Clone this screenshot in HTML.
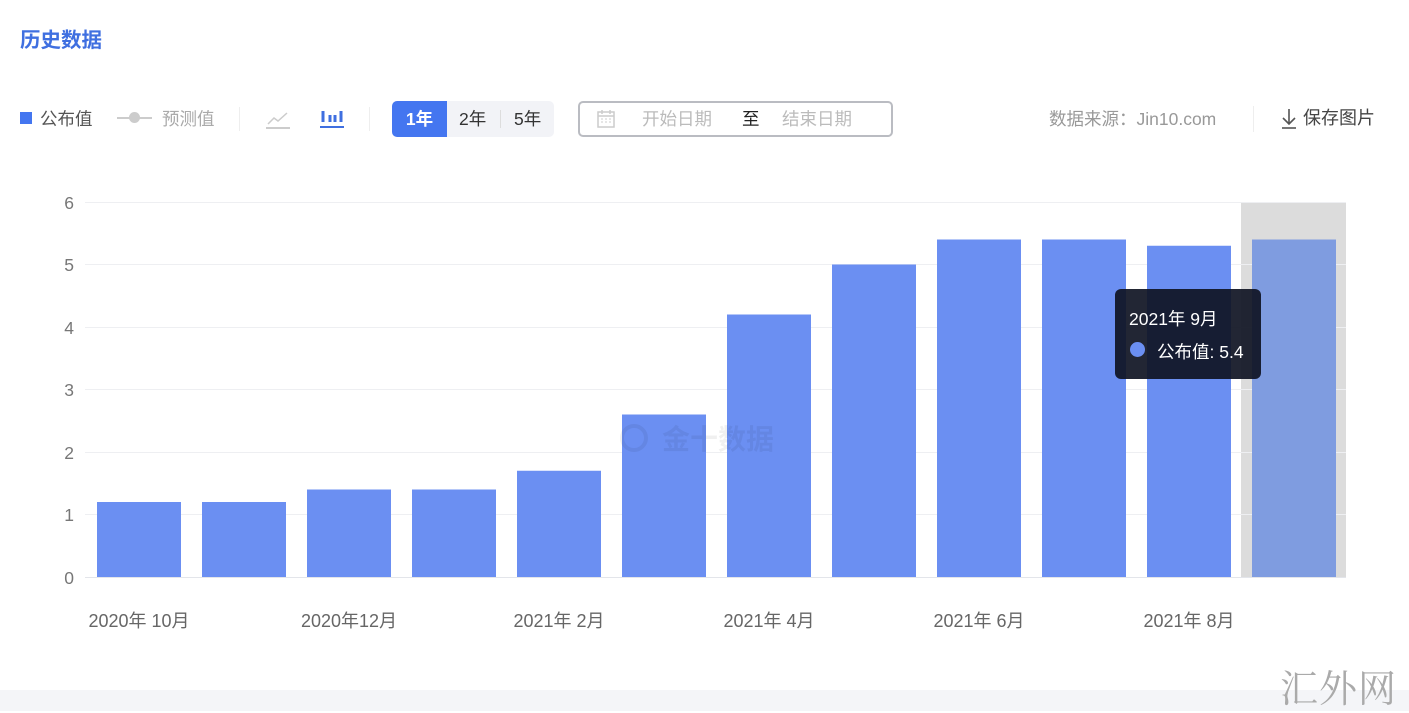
<!DOCTYPE html>
<html><head><meta charset="utf-8">
<style>
*{margin:0;padding:0;box-sizing:border-box}
body{width:1409px;height:711px;background:#fff;position:relative;overflow:hidden;font-family:"Liberation Sans","Noto Sans CJK SC",sans-serif}
.a{position:absolute;white-space:nowrap}
</style></head><body>
<div class="a" style="left:20px;top:23px;font-size:20.5px;font-weight:bold;color:#3f6fe0">历史数据</div>

<div class="a" style="left:20px;top:112px;width:12px;height:12px;background:#4476f0"></div>
<div class="a" style="left:40px;top:106px;font-size:17.5px;color:#555">公布值</div>
<div class="a" style="left:117px;top:117px;width:35px;height:2px;background:#ccc"></div>
<div class="a" style="left:129px;top:112px;width:11px;height:11px;border-radius:50%;background:#ccc"></div>
<div class="a" style="left:162px;top:106px;font-size:17.5px;color:#aaa">预测值</div>
<div class="a" style="left:239px;top:107px;width:1px;height:24px;background:#eee"></div>
<svg class="a" style="left:265px;top:108px" width="26" height="22"><path d="M3 16 L9 10 L13 13 L22 5" stroke="#ccc" stroke-width="1.5" fill="none"/><path d="M1 20 H25" stroke="#ccc" stroke-width="2"/></svg>
<svg class="a" style="left:319px;top:106px" width="26" height="24"><path d="M4 5 V16 M11 9 V16 M16 9 V16 M22 5 V16" stroke="#3f6fe0" stroke-width="3" fill="none"/><path d="M1 21 H25" stroke="#3f6fe0" stroke-width="2"/></svg>
<div class="a" style="left:369px;top:107px;width:1px;height:24px;background:#eee"></div>

<div class="a" style="left:392px;top:101px;width:162px;height:36px;background:#f2f3f7;border-radius:5px"></div>
<div class="a" style="left:392px;top:101px;width:55px;height:36px;background:#4476f0;border-radius:5px 0 0 5px;color:#fff;font-size:17.5px;font-weight:bold;text-align:center;line-height:36px">1年</div>
<div class="a" style="left:459px;top:101px;font-size:17.5px;color:#333;line-height:36px">2年</div>
<div class="a" style="left:500px;top:110px;width:1px;height:18px;background:#ddd"></div>
<div class="a" style="left:514px;top:101px;font-size:17.5px;color:#333;line-height:36px">5年</div>

<div class="a" style="left:578px;top:101px;width:315px;height:36px;border:2px solid #babcc2;border-radius:5px"></div>
<svg class="a" style="left:596px;top:109px" width="20" height="20"><rect x="2" y="3" width="16" height="15" fill="none" stroke="#ccc" stroke-width="1.5"/><path d="M2 7 H18 M6 1 V5 M14 1 V5" stroke="#ccc" stroke-width="1.5"/><path d="M5 10h2M9 10h2M13 10h2M5 13h2M9 13h2M13 13h2" stroke="#ccc"/></svg>
<div class="a" style="left:642px;top:106px;font-size:17.5px;color:#bbb">开始日期</div>
<div class="a" style="left:742px;top:106px;font-size:17.5px;color:#222">至</div>
<div class="a" style="left:782px;top:106px;font-size:17.5px;color:#bbb">结束日期</div>

<div class="a" style="left:1049px;top:106px;font-size:17.5px;color:#999">数据来源：Jin10.com</div>
<div class="a" style="left:1253px;top:106px;width:1px;height:26px;background:#eee"></div>
<svg class="a" style="left:1279px;top:106px" width="20" height="24"><path d="M10 3 V18 M4 12 L10 18 L16 12" stroke="#555" stroke-width="1.6" fill="none"/><path d="M3 22 H17" stroke="#555" stroke-width="1.6"/></svg>
<div class="a" style="left:1303px;top:104px;font-size:18px;color:#444">保存图片</div>

<svg class="a" style="left:0;top:0" width="1409" height="711">
<rect x="1241" y="202" width="105" height="375" fill="#dcdcdc"/>
<g stroke="#eeeff2" stroke-width="1">
<line x1="85" x2="1346" y1="202.5" y2="202.5"/><line x1="85" x2="1346" y1="264.5" y2="264.5"/><line x1="85" x2="1346" y1="327.5" y2="327.5"/><line x1="85" x2="1346" y1="389.5" y2="389.5"/><line x1="85" x2="1346" y1="452.5" y2="452.5"/><line x1="85" x2="1346" y1="514.5" y2="514.5"/>
</g>
<line x1="85" x2="1346" y1="577.5" y2="577.5" stroke="#e3e5ea"/>
<g font-size="17.5" fill="#777" text-anchor="end" font-family="Liberation Sans,sans-serif">
<text x="74" y="209">6</text><text x="74" y="271">5</text><text x="74" y="334">4</text><text x="74" y="396">3</text><text x="74" y="459">2</text><text x="74" y="521">1</text><text x="74" y="584">0</text>
</g>
<g fill="#6b8ff2">
<rect x="97" y="502" width="84" height="75"/>
<rect x="202" y="502" width="84" height="75"/>
<rect x="307" y="489.5" width="84" height="87.5"/>
<rect x="412" y="489.5" width="84" height="87.5"/>
<rect x="517" y="470.75" width="84" height="106.25"/>
<rect x="622" y="414.5" width="84" height="162.5"/>
<rect x="727" y="314.5" width="84" height="262.5"/>
<rect x="832" y="264.5" width="84" height="312.5"/>
<rect x="937" y="239.5" width="84" height="337.5"/>
<rect x="1042" y="239.5" width="84" height="337.5"/>
<rect x="1147" y="245.75" width="84" height="331.25"/>
</g>
<rect x="1252" y="239.5" width="84" height="337.5" fill="#7f9ce0"/>
<text x="662" y="449" font-size="28" font-weight="bold" fill="#000" fill-opacity="0.06" font-family="Noto Sans CJK SC,sans-serif">金十数据</text>
<circle cx="634" cy="438" r="12" fill="none" stroke="#000" stroke-opacity="0.06" stroke-width="4"/>
<g font-size="18" fill="#666" font-family="Liberation Sans,Noto Sans CJK SC,sans-serif" text-anchor="middle">
<text x="139" y="627">2020年 10月</text><text x="349" y="627">2020年12月</text><text x="559" y="627">2021年 2月</text><text x="769" y="627">2021年 4月</text><text x="979" y="627">2021年 6月</text><text x="1189" y="627">2021年 8月</text>
</g>
</svg>

<div class="a" style="left:1115px;top:289px;width:146px;height:90px;background:rgba(15,20,35,0.92);border-radius:6px"></div>
<div class="a" style="left:1129px;top:306px;font-size:17.5px;color:#fff">2021年 9月</div>
<div class="a" style="left:1130px;top:342px;width:15px;height:15px;border-radius:50%;background:#6b8ff2"></div>
<div class="a" style="left:1157px;top:339px;font-size:17.5px;color:#fff">公布值: 5.4</div>

<div class="a" style="left:0;top:690px;width:1409px;height:21px;background:#f4f5f8"></div>
<div class="a" style="left:1280px;top:658px;font-size:38px;color:#aaa;font-family:'Noto Serif CJK SC',serif;letter-spacing:1px">汇外网</div>
</body></html>
